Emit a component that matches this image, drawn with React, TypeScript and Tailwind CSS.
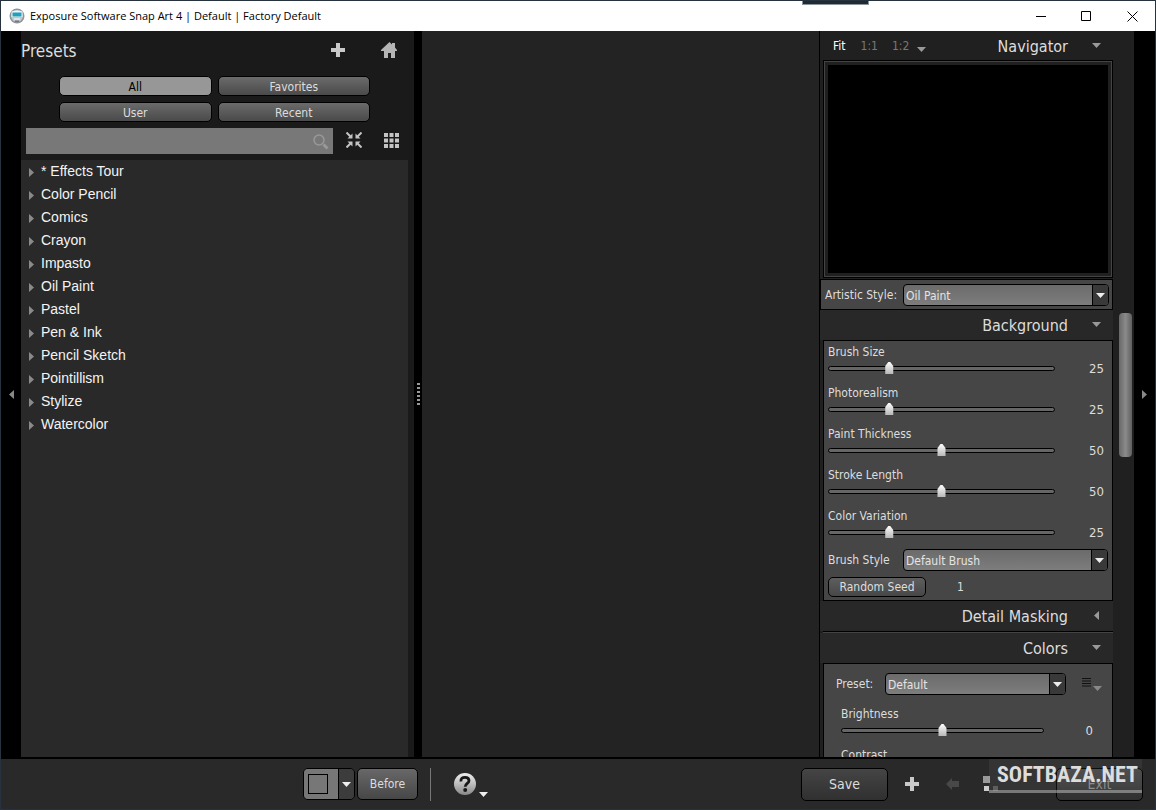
import { useState } from "react";
import clsx from "clsx";

const filters = ["All", "Favorites", "User", "Recent"];

const presets = [
  "* Effects Tour",
  "Color Pencil",
  "Comics",
  "Crayon",
  "Impasto",
  "Oil Paint",
  "Pastel",
  "Pen & Ink",
  "Pencil Sketch",
  "Pointillism",
  "Stylize",
  "Watercolor",
];

const backgroundSliders = [
  { id: "brush-size", label: "Brush Size", value: 25 },
  { id: "photorealism", label: "Photorealism", value: 25 },
  { id: "paint-thickness", label: "Paint Thickness", value: 50 },
  { id: "stroke-length", label: "Stroke Length", value: 50 },
  { id: "color-variation", label: "Color Variation", value: 25 },
];

interface SliderProps {
  id: string;
  label: string;
  initial: number;
  min?: number;
}

function Slider({ id, label, initial, min = 0 }: SliderProps) {
  const [value, setValue] = useState(initial);

  return (
    <div className="mb-2">
      <label htmlFor={id} className="block h-5 leading-5">
        {label}
      </label>
      <div className="flex h-[13px] items-center">
        <input
          id={id}
          type="range"
          min={min}
          max={100}
          value={value}
          onChange={(e) => setValue(Number(e.target.value))}
          className="
            h-[13px] min-w-0 flex-1 appearance-none bg-transparent
            [&::-webkit-slider-runnable-track]:h-[5px]
            [&::-webkit-slider-runnable-track]:rounded-full
            [&::-webkit-slider-runnable-track]:border
            [&::-webkit-slider-runnable-track]:border-black
            [&::-webkit-slider-runnable-track]:bg-[#666]
            [&::-webkit-slider-thumb]:-mt-[5px]
            [&::-webkit-slider-thumb]:h-3
            [&::-webkit-slider-thumb]:w-4
            [&::-webkit-slider-thumb]:appearance-none
            [&::-webkit-slider-thumb]:bg-linear-to-b
            [&::-webkit-slider-thumb]:from-white
            [&::-webkit-slider-thumb]:to-[#b8b8b8]
            [&::-webkit-slider-thumb]:[clip-path:polygon(4px_4px,7px_0,9px_0,12px_4px,12px_12px,4px_12px)]
          "
        />
        <output htmlFor={id} className="w-[50px] pr-px text-right text-[13px] leading-[13px]">
          {value}
        </output>
      </div>
    </div>
  );
}

interface PickerProps {
  id: string;
  options: string[];
  className?: string;
}

function Picker({ id, options, className }: PickerProps) {
  return (
    <div className={clsx("relative h-[22px]", className)}>
      <select
        id={id}
        className="h-full w-full appearance-none rounded border border-black bg-linear-to-b from-[#6b6b6b] to-[#7d7d7d] pt-px pr-5 pl-[2px] text-[#e4e4e4]"
      >
        {options.map((o) => (
          <option key={o}>{o}</option>
        ))}
      </select>
      <span className="pointer-events-none absolute inset-y-px right-px flex w-4 items-center justify-center rounded-r-[3px] border-l border-black bg-[#393939]">
        <Down className="h-[5px] w-[9px] text-[#eee]" />
      </span>
    </div>
  );
}

function Down({ className }: { className: string }) {
  return (
    <svg viewBox="0 0 10 5" preserveAspectRatio="none" className={className} fill="currentColor">
      <path d="M0 0h10L5 5z" />
    </svg>
  );
}

function Right({ className }: { className: string }) {
  return (
    <svg viewBox="0 0 5 10" preserveAspectRatio="none" className={className} fill="currentColor">
      <path d="M0 0v10l5-5z" />
    </svg>
  );
}

function Plus() {
  return (
    <svg viewBox="0 0 16 16" className="size-4" fill="#c9c9c9">
      <path d="M6 1h4v5h5v4h-5v5H6v-5H1V6h5z" />
    </svg>
  );
}

function SectionHeader({ title, collapsed }: { title: string; collapsed?: boolean }) {
  return (
    <button
      type="button"
      aria-expanded={!collapsed}
      className="flex h-[30px] w-full shrink-0 items-center justify-end bg-[#282828] pt-[2px] pr-3 text-[16px] text-[#ddd]"
    >
      {title}
      <span className="ml-6 flex w-[9px] justify-center text-[#999]">
        {collapsed ? (
          <Right className="mb-1 h-[9px] w-[5px] rotate-180" />
        ) : (
          <Down className="mb-1 h-[5px] w-[9px]" />
        )}
      </span>
    </button>
  );
}

function TitleBar() {
  return (
    <header className="flex h-[30px] shrink-0 items-center bg-white pl-2 font-['Open_Sans','Noto_Sans',sans-serif] text-[11px] text-black">
      <svg viewBox="0 0 16 16" className="mr-[5px] size-4">
        <circle cx="8" cy="8" r="7.5" fill="#8d9599" />
        <circle cx="8" cy="8" r="6" fill="#c3c8ca" />
        <path d="M2.5 3.5Q8 1.5 13.5 3.5V9h-11z" fill="#eef6f8" />
        <path d="M3.500 4.500h9v4h-9z" fill="#20a0bd" />
        <path d="M5 10.500h6v1H5z" fill="#fff" />
        <path d="M6 12.500h4v1.500H6z" fill="#777" />
      </svg>
      <h1 className="flex-1 whitespace-nowrap">Exposure Software Snap Art 4 | Default | Factory Default</h1>
      <button type="button" aria-label="Minimize" className="flex h-full w-[45px] items-center justify-center">
        <svg viewBox="0 0 10 10" className="size-[10px]" stroke="#000">
          <path d="M0 5.500h10" />
        </svg>
      </button>
      <button type="button" aria-label="Maximize" className="flex h-full w-[46px] items-center justify-center">
        <svg viewBox="0 0 10 10" className="size-[10px]" stroke="#000" fill="none">
          <path d="M.5.5h9v9h-9z" />
        </svg>
      </button>
      <button type="button" aria-label="Close" className="flex h-full w-[46px] items-center justify-center">
        <svg viewBox="0 0 11 11" className="size-[11px]" stroke="#000">
          <path d="M.5.5l10 10M10.500.5l-10 10" />
        </svg>
      </button>
    </header>
  );
}

function PresetsPanel() {
  const [active, setActive] = useState("All");

  return (
    <aside className="flex w-[393px] shrink-0 flex-col bg-[#1a1a1a]">
      <div className="flex h-[41px] items-center pr-[17px]">
        <h2 className="flex-1 text-[17px] text-[#ddd]">Presets</h2>
        <button type="button" aria-label="Add preset" className="mb-1">
          <Plus />
        </button>
        <button type="button" aria-label="Home" className="mb-1 ml-[35px]">
          <svg viewBox="0 0 16 16" className="h-4 w-4" fill="#b5b5b5">
            <path d="M8.500 0L11 2.500V1h3v4.500L16 8v1h-2v7h-4v-5H7v5H3V9H0V8z" />
          </svg>
        </button>
      </div>

      <div className="mr-[44px] ml-[38px] grid grid-cols-2 gap-[6px] pt-1">
        {filters.map((f) => (
          <button
            key={f}
            type="button"
            onClick={() => setActive(f)}
            className={clsx(
              "h-5 rounded-[5px] border border-black pt-px text-[12px] leading-[18px]",
              active === f
                ? "bg-[#979797] text-black"
                : "bg-linear-to-b from-[#6b6b6b] to-[#4a4a4a] text-[#ddd]"
            )}
          >
            {f}
          </button>
        ))}
      </div>

      <div className="flex h-[38px] items-center pr-[15px] pl-[5px]">
        <div className="relative h-[26px] flex-1">
          <input
            type="search"
            aria-label="Search presets"
            className="h-full w-full bg-[#787878] pr-7 pl-2 text-white outline-none"
          />
          <svg
            viewBox="0 0 16 16"
            className="pointer-events-none absolute top-[6px] right-1 size-4"
            fill="none"
            stroke="#999"
          >
            <circle cx="6" cy="6" r="5" strokeWidth="1.5" />
            <path d="M10.500 10.500l4 4" strokeWidth="3" />
          </svg>
        </div>
        <button type="button" aria-label="Collapse all" className="mb-[2px] ml-[13px]">
          <svg viewBox="0 0 16 16" className="size-4" fill="#c4c4c4" stroke="#c4c4c4">
            <path
              d="M.5.5L5 5M15.500.5L11 5M.5 15.500L5 11M15.500 15.500L11 11"
              strokeWidth="2"
            />
            <path d="M6.500 1.500v5h-5zM9.500 1.500v5h5zM6.500 14.500v-5h-5zM9.500 14.500v-5h5z" stroke="none" />
          </svg>
        </button>
        <button type="button" aria-label="Grid view" className="mb-[2px] ml-[22px]">
          <svg viewBox="0 0 15 15" className="size-[15px]" fill="#c4c4c4">
            <path d="M0 0h4v4H0zM5.500 0h4v4h-4zM11 0h4v4h-4zM0 5.500h4v4H0zM5.500 5.500h4v4h-4zM11 5.500h4v4h-4zM0 11h4v4H0zM5.500 11h4v4h-4zM11 11h4v4h-4z" />
          </svg>
        </button>
      </div>

      <ul className="mr-[6px] min-h-0 flex-1 overflow-hidden bg-[#292929] font-['Liberation_Sans',Arial,sans-serif] text-[14px] text-[#f4f4f4]">
        {presets.map((p) => (
          <li key={p}>
            <button type="button" className="flex h-[23px] w-full items-center pl-2 text-left">
              <Right className="mt-[2px] mr-[7px] h-[9px] w-[5px] text-[#8a8a8a]" />
              {p}
            </button>
          </li>
        ))}
      </ul>
    </aside>
  );
}

function SettingsPanel() {
  return (
    <aside className="flex w-[315px] shrink-0 border-l border-black bg-[#202020]">
      <div className="flex min-w-0 flex-1 flex-col overflow-hidden">
        <div className="flex h-[29px] shrink-0 items-center pr-3 pl-[13px] text-[12px] text-[#777]">
          <button type="button" className="text-white">
            Fit
          </button>
          <button type="button" className="ml-[15px]">
            1:1
          </button>
          <button type="button" className="ml-[14px] flex items-center">
            1:2
            <Down className="mt-2 ml-2 h-[5px] w-[9px] text-[#999]" />
          </button>
          <h2 className="flex-1 pt-[2px] text-right text-[16px] text-[#ddd]">Navigator</h2>
          <Down className="mb-px ml-6 h-[5px] w-[9px] text-[#999]" />
        </div>

        <div className="ml-[3px] h-[218px] shrink-0 border border-black">
          <div className="h-full border border-[#444] p-[3px]">
            <div className="h-full bg-black" />
          </div>
        </div>

        <div className="mt-px flex h-[31px] shrink-0 items-center border border-black bg-[#464646] pt-px pr-[3px] pl-1">
          <label htmlFor="artistic-style" className="w-[78px] whitespace-nowrap">
            Artistic Style:
          </label>
          <Picker id="artistic-style" options={["Oil Paint", "Pastel", "Watercolor"]} className="flex-1" />
        </div>

        <SectionHeader title="Background" />
        <section className="ml-[3px] shrink-0 border border-black bg-[#464646] pr-[7px] pb-[3px] pl-1">
          <div className="pt-px">
            {backgroundSliders.map((s) => (
              <Slider key={s.id} id={s.id} label={s.label} initial={s.value} />
            ))}
          </div>
          <div className="-mr-[3px] flex items-center pt-[2px]">
            <label htmlFor="brush-style" className="w-[75px]">
              Brush Style
            </label>
            <Picker id="brush-style" options={["Default Brush", "Soft Brush"]} className="flex-1" />
          </div>
          <div className="mt-[6px] flex items-center">
            <button
              type="button"
              className="h-5 w-[98px] rounded-[5px] border border-black bg-linear-to-b from-[#5e5e5e] to-[#474747] leading-[18px]"
            >
              Random Seed
            </button>
            <span className="ml-[31px]">1</span>
          </div>
        </section>

        <SectionHeader title="Detail Masking" collapsed />
        <div className="ml-[3px] h-[2px] shrink-0 border-b border-[#444] bg-black" />
        <SectionHeader title="Colors" />
        <section className="ml-[3px] flex-1 border border-b-0 border-black bg-[#464646] px-3">
          <div className="mt-[9px] flex items-center">
            <label htmlFor="color-preset" className="w-[49px] shrink-0">
              Preset:
            </label>
            <Picker id="color-preset" options={["Default", "Warm", "Cool"]} className="w-[181px] shrink-0" />
            <button type="button" aria-label="Preset menu" className="ml-4 flex">
              <svg viewBox="0 0 9 9" className="size-[9px]" stroke="#111">
                <path d="M0 .5h9M0 3h9M0 5.500h9M0 8h9" />
              </svg>
              <Down className="mt-2 ml-[2px] h-[5px] w-[9px] text-[#888]" />
            </button>
          </div>
          <div className="mt-[9px] mr-[6px] ml-[5px]">
            <Slider id="brightness" label="Brightness" initial={0} min={-100} />
            <Slider id="contrast" label="Contrast" initial={0} min={-100} />
          </div>
        </section>
      </div>

      <div className="w-[21px] shrink-0 pt-[282px] pl-[6px]">
        <div className="h-36 w-[13px] rounded bg-linear-to-r from-[#686868] via-[#8a8a8a] to-[#606060]" />
      </div>
    </aside>
  );
}

function BottomBar() {
  return (
    <footer className="relative flex h-[52px] shrink-0 items-center border-t-2 border-black bg-[#292929] pr-3 pl-[302px] text-[12px] text-[#ddd]">
      <div className="flex h-8 overflow-hidden rounded-[5px] border border-black">
        <button type="button" aria-label="View layout" className="flex w-[34px] items-center bg-[#777] pl-1">
          <span className="size-5 border border-black" />
        </button>
        <button
          type="button"
          aria-label="Choose layout"
          className="flex w-4 items-center justify-center border-l border-black bg-[#3c3c3c]"
        >
          <Down className="h-[5px] w-[9px] text-[#eee]" />
        </button>
      </div>
      <button
        type="button"
        className="ml-[2px] h-8 w-[61px] rounded-[5px] border border-black bg-linear-to-b from-[#686868] to-[#474747]"
      >
        Before
      </button>
      <span className="ml-3 h-[33px] w-px bg-[#777]" />
      <button type="button" aria-label="Help" className="ml-[23px] flex items-center">
        <svg viewBox="0 0 22 22" className="size-[22px]">
          <defs>
            <linearGradient id="help" x1="0" y1="0" x2="0" y2="1">
              <stop offset="0" stopColor="#f0f0f0" />
              <stop offset="1" stopColor="#888" />
            </linearGradient>
          </defs>
          <circle cx="11" cy="11" r="11" fill="url(#help)" />
          <path
            d="M7 8.500C6.500 5.500 8.500 4.300 11 4.300S15 5.600 15 7.700C15 10.300 11.200 10.600 11.200 13.800"
            fill="none"
            stroke="#181818"
            strokeWidth="2.800"
          />
          <circle cx="11.200" cy="17" r="2" fill="#181818" />
        </svg>
        <Down className="mt-5 ml-[3px] h-[5px] w-[9px] text-[#eee]" />
      </button>

      <div className="flex-1" />

      <button
        type="button"
        className="h-[33px] w-[87px] rounded-[5px] border border-black bg-linear-to-b from-[#454545] to-[#303030] text-[14px]"
      >
        Save
      </button>
      <button type="button" aria-label="Add" className="ml-4">
        <Plus />
      </button>
      <button type="button" aria-label="Previous" className="ml-[26px]" disabled>
        <svg viewBox="0 0 13 12" className="h-3 w-[13px]" fill="#484848">
          <path d="M0 6l6-6v3h7v6H6v3z" />
        </svg>
      </button>
      <button type="button" aria-label="Queue" className="ml-6">
        <svg viewBox="0 0 16 16" className="size-4">
          <path d="M0 0h7v7H0z" fill="#999" />
          <path d="M1 10h5v5H1z" fill="#ccc" />
          <path d="M10 10h5v5h-5z" fill="#555" />
        </svg>
      </button>
      <button
        type="button"
        className="ml-[57px] h-[33px] w-[87px] rounded-[5px] border border-black bg-linear-to-b from-[#454545] to-[#303030] text-[14px] text-[#888]"
      >
        Exit
      </button>

      {/* Site stamp laid over the right end of the bar */}
      <div className="pointer-events-none absolute top-0 right-[13px] flex h-[34px] w-[153px] items-center justify-end border-b-[3px] border-[#ccc]/45 bg-white/5 pr-1 font-['Roboto_Condensed','Roboto',sans-serif] text-[22px] leading-none font-bold text-[#ddd]">
        SOFTBAZA.NET
      </div>
    </footer>
  );
}

export default function App() {
  return (
    <div className="relative flex h-screen flex-col overflow-hidden border border-[#26333f] bg-black font-['DejaVu_Sans_Condensed','DejaVu_Sans',sans-serif] text-[12px] text-[#ddd]">
      <div className="absolute -top-px right-[286px] h-[5px] w-[67px] border border-t-0 border-[#8b959c] bg-[#202a33]" />
      <TitleBar />
      <main className="flex min-h-0 flex-1">
        <button
          type="button"
          aria-label="Hide presets"
          className="flex w-5 shrink-0 items-center justify-center bg-black text-[#888]"
        >
          <Right className="h-[9px] w-[5px] rotate-180" />
        </button>
        <PresetsPanel />
        <div className="flex w-2 shrink-0 flex-col items-center justify-center gap-[2px] bg-black">
          {[0, 1, 2, 3, 4, 5].map((n) => (
            <span key={n} className="h-[2px] w-[3px] bg-[#999]" />
          ))}
        </div>
        <div className="min-w-0 flex-1 bg-[#232323]" />
        <SettingsPanel />
        <button
          type="button"
          aria-label="Hide settings"
          className="flex w-[21px] shrink-0 items-center justify-center bg-black text-[#888]"
        >
          <Right className="h-[9px] w-[5px]" />
        </button>
      </main>
      <BottomBar />
    </div>
  );
}
